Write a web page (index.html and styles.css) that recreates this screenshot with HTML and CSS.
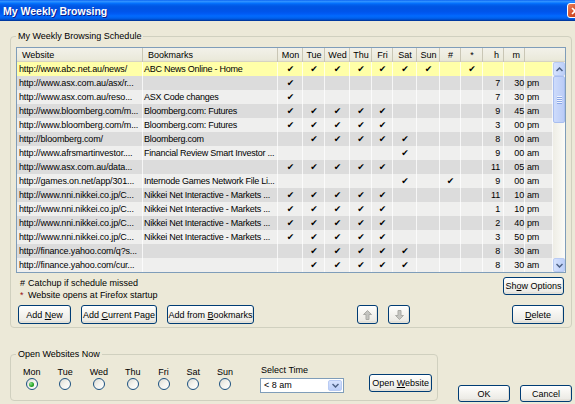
FILE: index.html
```html
<!DOCTYPE html>
<html>
<head>
<meta charset="utf-8">
<title>My Weekly Browsing</title>
<link rel="stylesheet" href="styles.css">
</head>
<body>
<div class="titlebar">
  <span class="title">My Weekly Browsing</span>
  <span class="close"><svg width="8" height="8" viewBox="0 0 8 8"><path d="M1 1 L7 7 M7 1 L1 7" stroke="#fff" stroke-width="1.6"/></svg></span>
</div>
<div class="client">
  <fieldset class="group sched">
    <legend>My Weekly Browsing Schedule</legend>
    <div class="listbox">
      <table class="hdr">
        <colgroup><col class="cw"><col class="cb"><col class="c25"><col class="c22"><col class="c25"><col class="c22"><col class="c21"><col class="c24"><col class="c23"><col class="c21"><col class="c22"><col class="c21"><col class="c21"><col class="c28"><col class="c12"></colgroup>
        <tr>
          <th class="l">Website</th><th class="l">Bookmarks</th><th>Mon</th><th>Tue</th><th>Wed</th><th>Thu</th><th>Fri</th><th>Sat</th><th>Sun</th><th>#</th><th>*</th><th class="r">h</th><th class="r">m</th><th class="e"></th><th class="e"></th>
        </tr>
      </table>
      <div class="body">
        <table class="grid">
          <colgroup><col class="cw"><col class="cb"><col class="c25"><col class="c22"><col class="c25"><col class="c22"><col class="c21"><col class="c24"><col class="c23"><col class="c21"><col class="c22"><col class="c21"><col class="c21"><col class="c28"></colgroup>
          <tr class="sel"><td class="u">http://www.abc.net.au/news/</td><td class="bk">ABC News Online - Home</td><td>✔</td><td>✔</td><td>✔</td><td>✔</td><td>✔</td><td>✔</td><td>✔</td><td></td><td>✔</td><td class="h"></td><td class="m"></td><td class="ap"></td></tr>
          <tr><td class="u">http://www.asx.com.au/asx/r...</td><td class="bk"></td><td>✔</td><td></td><td></td><td></td><td></td><td></td><td></td><td></td><td></td><td class="h">7</td><td class="m">30</td><td class="ap">pm</td></tr>
          <tr><td class="u">http://www.asx.com.au/reso...</td><td class="bk">ASX Code changes</td><td>✔</td><td></td><td></td><td></td><td></td><td></td><td></td><td></td><td></td><td class="h">7</td><td class="m">30</td><td class="ap">pm</td></tr>
          <tr><td class="u">http://www.bloomberg.com/m...</td><td class="bk">Bloomberg.com: Futures</td><td>✔</td><td>✔</td><td>✔</td><td>✔</td><td>✔</td><td></td><td></td><td></td><td></td><td class="h">9</td><td class="m">45</td><td class="ap">am</td></tr>
          <tr><td class="u">http://www.bloomberg.com/m...</td><td class="bk">Bloomberg.com: Futures</td><td>✔</td><td>✔</td><td>✔</td><td>✔</td><td>✔</td><td></td><td></td><td></td><td></td><td class="h">3</td><td class="m">00</td><td class="ap">pm</td></tr>
          <tr><td class="u">http://bloomberg.com/</td><td class="bk">Bloomberg.com</td><td></td><td>✔</td><td>✔</td><td>✔</td><td>✔</td><td>✔</td><td></td><td></td><td></td><td class="h">8</td><td class="m">00</td><td class="ap">am</td></tr>
          <tr><td class="u">http://www.afrsmartinvestor....</td><td class="bk">Financial Review Smart Investor ...</td><td></td><td></td><td></td><td></td><td></td><td>✔</td><td></td><td></td><td></td><td class="h">9</td><td class="m">00</td><td class="ap">am</td></tr>
          <tr><td class="u">http://www.asx.com.au/data...</td><td class="bk"></td><td>✔</td><td>✔</td><td>✔</td><td>✔</td><td>✔</td><td></td><td></td><td></td><td></td><td class="h">11</td><td class="m">05</td><td class="ap">am</td></tr>
          <tr><td class="u">http://games.on.net/app/301...</td><td class="bk">Internode Games Network File Li...</td><td></td><td></td><td></td><td></td><td></td><td>✔</td><td></td><td>✔</td><td></td><td class="h">9</td><td class="m">00</td><td class="ap">am</td></tr>
          <tr><td class="u">http://www.nni.nikkei.co.jp/C...</td><td class="bk">Nikkei Net Interactive - Markets ...</td><td>✔</td><td>✔</td><td>✔</td><td>✔</td><td>✔</td><td></td><td></td><td></td><td></td><td class="h">11</td><td class="m">10</td><td class="ap">am</td></tr>
          <tr><td class="u">http://www.nni.nikkei.co.jp/C...</td><td class="bk">Nikkei Net Interactive - Markets ...</td><td>✔</td><td>✔</td><td>✔</td><td>✔</td><td>✔</td><td></td><td></td><td></td><td></td><td class="h">1</td><td class="m">10</td><td class="ap">pm</td></tr>
          <tr><td class="u">http://www.nni.nikkei.co.jp/C...</td><td class="bk">Nikkei Net Interactive - Markets ...</td><td>✔</td><td>✔</td><td>✔</td><td>✔</td><td>✔</td><td></td><td></td><td></td><td></td><td class="h">2</td><td class="m">40</td><td class="ap">pm</td></tr>
          <tr><td class="u">http://www.nni.nikkei.co.jp/C...</td><td class="bk">Nikkei Net Interactive - Markets ...</td><td>✔</td><td>✔</td><td>✔</td><td>✔</td><td>✔</td><td></td><td></td><td></td><td></td><td class="h">3</td><td class="m">50</td><td class="ap">pm</td></tr>
          <tr><td class="u">http://finance.yahoo.com/q?s...</td><td class="bk"></td><td></td><td>✔</td><td>✔</td><td>✔</td><td>✔</td><td>✔</td><td></td><td></td><td></td><td class="h">8</td><td class="m">30</td><td class="ap">am</td></tr>
          <tr><td class="u">http://finance.yahoo.com/cur...</td><td class="bk"></td><td></td><td>✔</td><td>✔</td><td>✔</td><td>✔</td><td>✔</td><td></td><td></td><td></td><td class="h">8</td><td class="m">30</td><td class="ap">am</td></tr>
        </table>
        <div class="vscroll">
          <div class="sbtn"><svg width="7" height="5" viewBox="0 0 7 5"><path d="M0.5 4 L3.5 1 L6.5 4" fill="none" stroke="#4D6185" stroke-width="1.5"/></svg></div>
          <div class="thumb"><span></span><span></span><span></span><span></span></div>
          <div class="track"></div>
          <div class="sbtn"><svg width="7" height="5" viewBox="0 0 7 5"><path d="M0.5 1 L3.5 4 L6.5 1" fill="none" stroke="#4D6185" stroke-width="1.5"/></svg></div>
        </div>
      </div>
    </div>
    <div class="notes-row">
      <div class="notes">
        <div class="note"><span class="sym">#</span>Catchup if schedule missed</div>
        <div class="note"><span class="sym star">*</span>Website opens at Firefox startup</div>
      </div>
      <button class="btn showopt"><span>Sh<u>o</u>w Options</span></button>
    </div>
    <div class="btn-row">
      <button class="btn addnew"><span>Add <u>N</u>ew</span></button>
      <button class="btn addcur"><span>Add <u>C</u>urrent Page</span></button>
      <button class="btn addbm"><span>Add from <u>B</u>ookmarks</span></button>
      <button class="btn arrow up"><svg width="9" height="10" viewBox="0 0 9 10"><path d="M4.5 0.5 L8.5 4.5 L6 4.5 L6 9.5 L3 9.5 L3 4.5 L0.5 4.5 Z" fill="#C4C4C0" stroke="#ABABA6" stroke-width="1"/></svg></button>
      <button class="btn arrow down"><svg width="9" height="10" viewBox="0 0 9 10"><path d="M4.5 9.5 L8.5 5.5 L6 5.5 L6 0.5 L3 0.5 L3 5.5 L0.5 5.5 Z" fill="#C4C4C0" stroke="#ABABA6" stroke-width="1"/></svg></button>
      <button class="btn delete"><span><u>D</u>elete</span></button>
    </div>
  </fieldset>
  <div class="bottom">
    <fieldset class="group now">
      <legend>Open Websites Now</legend>
      <div class="nowrow">
        <div class="days">
          <div class="day"><span>Mon</span><span class="radio on"></span></div>
          <div class="day"><span>Tue</span><span class="radio"></span></div>
          <div class="day"><span>Wed</span><span class="radio"></span></div>
          <div class="day"><span>Thu</span><span class="radio"></span></div>
          <div class="day"><span>Fri</span><span class="radio"></span></div>
          <div class="day"><span>Sat</span><span class="radio"></span></div>
          <div class="day"><span>Sun</span><span class="radio"></span></div>
        </div>
        <div class="seltime">
          <div class="sellabel">Select Time</div>
          <div class="select"><span class="val">&lt; 8 am</span><span class="drop"><svg width="7" height="5" viewBox="0 0 7 5"><path d="M0.5 1 L3.5 4 L6.5 1" fill="none" stroke="#4D6185" stroke-width="1.5"/></svg></span></div>
        </div>
        <button class="btn openweb"><span>Open <u>W</u>ebsite</span></button>
      </div>
    </fieldset>
    <div class="dlgbtns">
      <button class="btn dlg"><span>OK</span></button>
      <button class="btn dlg"><span>Cancel</span></button>
    </div>
  </div>
</div>
</body>
</html>
```

FILE: styles.css
```css
* { box-sizing: border-box; }
html, body { margin: 0; padding: 0; }
body {
  width: 575px;
  height: 404px;
  overflow: hidden;
  background: #ECE9D8;
  font-family: "Liberation Sans", Arial, sans-serif;
  font-size: 9px;
  color: #000;
}

/* title bar */
.titlebar {
  height: 21px;
  display: flex;
  align-items: center;
  padding-left: 3px;
  background: linear-gradient(to bottom, #0058EE 0%, #3593FF 5%, #288EFF 9%, #127DFF 13%, #036FFC 17%, #0262EE 22%, #0057E5 30%, #0054E3 40%, #0055EB 56%, #005BF5 66%, #026AFE 76%, #0062EF 86%, #0052D6 92%, #0040AB 96%, #003092 100%);
}
.title {
  flex: 1;
  color: #fff;
  font-weight: bold;
  font-size: 10.5px;
  text-shadow: 1px 1px 0 #0A1E8C;
}
.close {
  width: 16px;
  height: 15px;
  margin-right: -8px;
  border: 1px solid #fff;
  border-radius: 3px;
  background: linear-gradient(135deg, #E9835F 0%, #D6502A 50%, #B8381A 100%);
  display: flex;
  align-items: center;
  justify-content: center;
}

.client { padding: 9px 3px 0 10px; }

/* group boxes */
fieldset.group {
  margin: 0;
  border: 1px solid #D0D0BF;
  border-radius: 4px;
}
fieldset.group legend {
  padding: 0 2px;
  line-height: 12px;
  height: 12px;
  font-size: 9px;
}
.sched {
  width: 562px;
  height: 298px;
  padding: 5px 5px 3px 5px;
}

/* list box */
.listbox {
  width: 550px;
  height: 226px;
  border: 1px solid #7F9DB9;
  background: #fff;
  display: flex;
  flex-direction: column;
}
table { border-collapse: collapse; table-layout: fixed; border-spacing: 0; }
.hdr { width: 548px; height: 14px; }
.grid { width: 536px; }
col.cw { width: 126px; }
col.cb { width: 135px; }
col.c25 { width: 25px; }
col.c24 { width: 24px; }
col.c23 { width: 23px; }
col.c22 { width: 22px; }
col.c21 { width: 21px; }
col.c28 { width: 28px; }
col.c12 { width: 12px; }

.hdr th {
  height: 14px;
  padding: 0;
  font-weight: normal;
  font-size: 9px;
  line-height: 13px;
  text-align: center;
  background: linear-gradient(#F2F1EA, #EBEADB 80%, #E2E0D0);
  box-shadow: inset -1px 0 0 #C9C6B5, inset 0 -1px 0 #D6D3C2;
  white-space: nowrap;
  overflow: hidden;
}
.hdr th.l { text-align: left; padding-left: 5px; }
.hdr th.r { text-align: right; padding-right: 5px; }
.hdr th.e { box-shadow: inset 0 -1px 0 #D6D3C2; }

.body { display: flex; flex: 1; }
.grid td {
  height: 14px;
  padding: 0;
  line-height: 14px;
  text-align: center;
  white-space: nowrap;
  overflow: hidden;
  font-family: "DejaVu Sans", sans-serif;
  font-size: 9px;
  color: #000;
  box-shadow: inset -1px 0 0 rgba(255,255,255,0.75);
}
.grid tr { background: #EFEFEE; }
.grid tr:nth-child(even) { background: #DCDCDC; }
.grid tr.sel { background: #FFFFA8; }
.grid td.u, .grid td.bk, .grid td.h, .grid td.m, .grid td.ap {
  font-family: "Liberation Sans", Arial, sans-serif;
  font-size: 9px;
  color: #000;
  letter-spacing: -0.15px;
}
.grid td.u { text-align: left; padding-left: 2px; }
.grid td.bk { text-align: left; padding-left: 1px; letter-spacing: -0.25px; }
.grid td.h { text-align: right; padding-right: 4px; }
.grid td.m { text-align: right; padding-right: 1px; }
.grid td.ap { text-align: left; padding-left: 2px; }

/* scrollbar */
.vscroll {
  width: 12px;
  height: 210px;
  display: flex;
  flex-direction: column;
  background: #F4F3EE;
}
.sbtn {
  height: 14px;
  border: 1px solid #B9CBF3;
  border-radius: 2px;
  background: linear-gradient(to right, #D6E2FD, #BCCFF9);
  display: flex;
  align-items: center;
  justify-content: center;
}
.thumb {
  height: 47px;
  border: 1px solid #A8BEF0;
  border-radius: 2px;
  background: linear-gradient(to right, #CDDBFB, #BACCF7);
  display: flex;
  flex-direction: column;
  align-items: center;
  justify-content: center;
  gap: 1px;
}
.thumb span { width: 5px; height: 1px; background: #EEF3FE; box-shadow: 0 1px 0 #8CA8E6; }
.track { flex: 1; background: linear-gradient(to right, #EEEDE5, #FBFBF8); }

/* notes & buttons */
.notes-row {
  display: flex;
  justify-content: space-between;
  align-items: flex-start;
  margin-top: 4px;
}
.note { line-height: 12px; padding-left: 4px; }
.sym { display: inline-block; width: 8px; }
.sym.star { color: #9A1010; }

.btn {
  font-family: "Liberation Sans", Arial, sans-serif;
  font-size: 9px;
  color: #000;
  height: 19px;
  padding: 0;
  border: 1px solid #003C74;
  border-radius: 3px;
  background: linear-gradient(to bottom, #FFFFFF 0%, #F6F5F1 40%, #ECEBE6 85%, #D6D0C5 100%);
  box-shadow: inset -1px -1px 0 #E3E2DA;
  display: inline-flex;
  align-items: center;
  justify-content: center;
  white-space: nowrap;
}
.btn span { white-space: pre; }
.showopt { width: 61px; height: 18px; margin-right: 2px; }
.btn-row { display: flex; margin-top: 4px; padding-left: 2px; }
.addnew { width: 53px; }
.addcur { width: 76px; margin-left: 10px; }
.addbm { width: 87px; margin-left: 10px; }
.arrow.up { width: 21px; margin-left: 103px; }
.arrow.down { width: 22px; margin-left: 10px; }
.delete { width: 52px; margin-left: auto; margin-right: 2px; }

/* bottom */
.bottom { display: flex; align-items: flex-start; margin-top: 20px; }
.now {
  width: 418px;
  height: 53px;
  padding: 6px 5px 0 5px;
}
.nowrow { display: flex; align-items: flex-start; }
.days { display: flex; gap: 17px; margin-left: 7px; }
.day { display: flex; flex-direction: column; align-items: center; }
.day span:first-child { line-height: 12px; }
.radio {
  width: 12px;
  height: 12px;
  border-radius: 50%;
  border: 1px solid #1C5180;
  background: linear-gradient(135deg, #DCDBD3 0%, #F4F3EE 50%, #FFFFFF 100%);
  display: flex;
  align-items: center;
  justify-content: center;
}
.radio.on::after {
  content: "";
  width: 5px;
  height: 5px;
  border-radius: 50%;
  background: radial-gradient(circle at 35% 35%, #8AE08A, #21A121 60%, #188018);
}
.seltime { margin-left: 27px; margin-top: -2px; }
.sellabel { line-height: 12px; padding-left: 1px; }
.select {
  margin-top: 2px;
  width: 84px;
  height: 15px;
  border: 1px solid #7F9DB9;
  background: #fff;
  display: flex;
}
.select .val { flex: 1; line-height: 13px; padding-left: 3px; }
.select .drop {
  width: 14px;
  margin: 1px;
  border: 1px solid #B9CBF3;
  border-radius: 2px;
  background: linear-gradient(to bottom, #D6E2FD, #BCCFF9);
  display: flex;
  align-items: center;
  justify-content: center;
}
.openweb { width: 63px; height: 18px; margin-left: 25px; margin-top: 8px; }

.dlgbtns { display: flex; margin-left: auto; margin-top: 37px; gap: 10px; }
.dlg { width: 52px; height: 17px; }
```
